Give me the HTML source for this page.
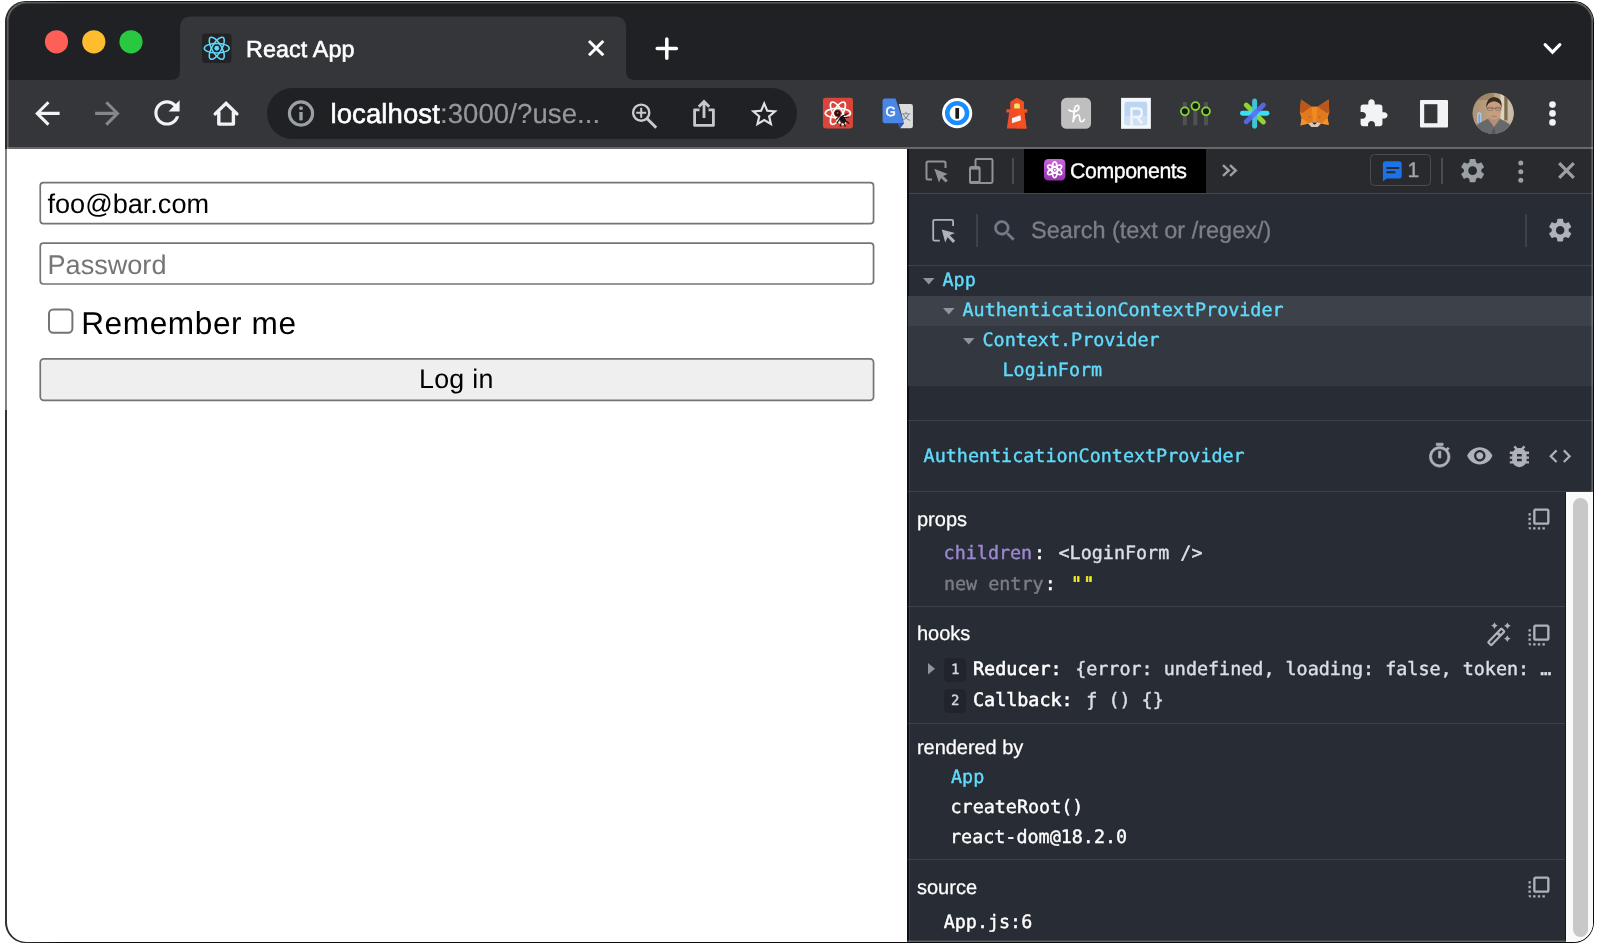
<!DOCTYPE html>
<html lang="en">
<head>
<meta charset="utf-8">
<title>React App</title>
<style>
*{box-sizing:border-box;margin:0;padding:0}
html,body{width:1600px;height:943px;overflow:hidden;background:#fff}
body{font-family:"Liberation Sans",sans-serif;position:relative;text-rendering:geometricPrecision}
.abs{position:absolute}
svg{display:block;overflow:visible}
/* window */
#frame{position:absolute;left:5.1px;top:1px;width:1589px;height:942px;border-radius:20.5px;background:linear-gradient(to right,#2c2c2e 0,#2c2c2e 20px,#0a0a0c 60px)}
#lline1{position:absolute;left:5.1px;top:148.8px;width:1.7px;height:260.8px;background:#828282}
#lline2{position:absolute;left:5.1px;top:409.6px;width:1.7px;height:514px;background:#353535}
#win{position:absolute;left:6.7px;top:1.9px;width:1586.4px;height:939.9px;border-radius:19.5px;overflow:hidden;background:#fff}
#tabstrip{position:absolute;left:0;top:0;width:1588px;height:78.1px;background:#202124}
#toolbar{position:absolute;left:0;top:78.1px;width:1588px;height:68.8px;background:#35363a}
#hl{position:absolute;left:0;top:0;right:0;bottom:0;border-radius:19.5px;box-shadow:inset 0 0 0 1.6px rgba(255,255,255,.26);pointer-events:none}
/* all following coords are image coords */
#c{position:absolute;left:-6.7px;top:-1.9px;width:1600px;height:943px;will-change:transform}
.t{position:absolute;white-space:pre;line-height:1}
.mono{font-family:"DejaVu Sans Mono","Liberation Mono",monospace;-webkit-text-stroke:.4px currentColor}
.mono b{font-weight:normal;-webkit-text-stroke:.55px #fff}
</style>
</head>
<body>
<div id="frame"></div>
<div id="lline1"></div><div id="lline2"></div>
<div id="win">
 <div id="tabstrip"></div>
 <div id="toolbar"></div>
 <div id="c">
 
 <svg class="abs" style="left:0;top:0" width="1600" height="160" viewBox="0 0 1600 160">
  <path d="M171 80 Q180 80 180 71 L180 28 Q180 16.5 191.5 16.5 L614.5 16.5 Q626 16.5 626 28 L626 71 Q626 80 635 80 Z" fill="#35363a"/>
  <circle cx="56.5" cy="41.8" r="11.6" fill="#fe5f57"/>
  <circle cx="93.8" cy="41.8" r="11.6" fill="#febc2e"/>
  <circle cx="131" cy="41.8" r="11.6" fill="#28c840"/>
  <rect x="202" y="33.5" width="29.5" height="29.5" rx="3.5" fill="#232325"/>
  <g transform="translate(216.75 48.25)" fill="none" stroke="#61dafb" stroke-width="1.5">
   <ellipse rx="12.5" ry="4.8"/>
   <ellipse rx="12.5" ry="4.8" transform="rotate(60)"/>
   <ellipse rx="12.5" ry="4.8" transform="rotate(120)"/>
   <circle r="2.4" fill="#61dafb" stroke="none"/>
  </g>
  <path d="M589 41 L603.3 55.3 M603.3 41 L589 55.3" stroke="#fff" stroke-width="3" fill="none"/>
  <path d="M657.2 48.6 H676.4 M666.8 39 V58.2" stroke="#fff" stroke-width="3.5" stroke-linecap="round" fill="none"/>
  <path d="M1545.1 44.7 L1552.5 52.2 L1559.9 44.7" stroke="#fff" stroke-width="3.1" stroke-linecap="round" stroke-linejoin="miter" fill="none"/>
 </svg>
 <div class="t" id="tabtitle" style="left:246px;top:37.6px;font-size:23.3px;color:#fff;letter-spacing:.12px;-webkit-text-stroke:.55px #fff">React App</div>
 <!--TABSTRIP-->
 <svg class="abs" style="left:28.88px;top:94.88px" width="36.75" height="36.75" viewBox="0 0 24 24"><path d="M20 11H7.83l5.59-5.59L12 4l-8 8 8 8 1.41-1.41L7.83 13H20v-2z" fill="#f1f3f4" /></svg>
<svg class="abs" style="left:88.88px;top:94.88px" width="36.75" height="36.75" viewBox="0 0 24 24"><path d="M12 4l-1.41 1.41L16.17 11H4v2h12.17l-5.58 5.59L12 20l8-8z" fill="#86878a" /></svg>
<svg class="abs" style="left:148.33px;top:94.32px" width="37.95" height="37.95" viewBox="0 0 24 24"><path d="M17.65 6.35C16.2 4.9 14.21 4 12 4c-4.42 0-7.99 3.58-7.99 8s3.57 8 7.99 8c3.73 0 6.84-2.55 7.73-6h-2.08c-.82 2.33-3.04 4-5.65 4-3.31 0-6-2.69-6-6s2.69-6 6-6c1.66 0 3.14.69 4.22 1.78L13 11h7V4l-2.35 2.35z" fill="#f1f3f4" /></svg>
<svg class="abs" style="left:0;top:0" width="400" height="150" viewBox="0 0 400 150"><path d="M215.2 113.9 L226.06 103.4 L236.9 113.9" fill="none" stroke="#f1f3f4" stroke-width="3.4" stroke-linecap="round" stroke-linejoin="miter"/><path d="M218.8 111.6 V124.1 H233.4 V111.6" fill="none" stroke="#f1f3f4" stroke-width="3.4" stroke-linejoin="round"/></svg>
<div class="abs" style="left:267px;top:87.5px;width:530px;height:51.5px;border-radius:26px;background:#202124"></div>
<svg class="abs" style="left:280px;top:93px" width="42" height="42" viewBox="280 93 42 42"><circle cx="301" cy="113.5" r="11.6" fill="none" stroke="#9aa0a6" stroke-width="3.1"/><circle cx="301" cy="108.2" r="1.9" fill="#9aa0a6"/><rect x="299.3" y="112" width="3.4" height="8.4" fill="#9aa0a6"/></svg>
<div class="t" id="url" style="left:330.5px;top:99.8px;font-size:27.5px;color:#fff;letter-spacing:.1px;-webkit-text-stroke:.6px #fff">localhost<span style="color:#94979b;-webkit-text-stroke:.2px #94979b">:3000/?use...</span></div>
<svg class="abs" style="left:625px;top:97px" width="40" height="36" viewBox="625 97 40 36"><circle cx="641.2" cy="112.7" r="8.1" fill="none" stroke="#c8cacd" stroke-width="2.4"/><path d="M647.2 118.8 L656.2 127.8" stroke="#c8cacd" stroke-width="2.9" fill="none"/><path d="M636.2 112.7 H646.2 M641.2 107.7 V117.7" stroke="#c8cacd" stroke-width="2" fill="none"/></svg>
<svg class="abs" style="left:688px;top:97px" width="32" height="32" viewBox="0 0 32 32"><path d="M11.5 12.8 H6.6 V28.4 H25.4 V12.8 H20.5" fill="none" stroke="#c5c8cc" stroke-width="2.8" stroke-linejoin="round"/><path d="M16 21 V5.5 M10.8 9.8 L16 4.6 L21.2 9.8" fill="none" stroke="#c5c8cc" stroke-width="2.8"/></svg>
<svg class="abs" style="left:747.8px;top:97.6px" width="32.4" height="32.4" viewBox="0 0 24 24"><path d="M22 9.24l-7.19-.62L12 2 9.19 8.63 2 9.24l5.46 4.73L5.82 21 12 17.27 18.18 21l-1.63-7.03L22 9.24zM12 15.4l-3.76 2.27 1-4.28-3.32-2.88 4.38-.38L12 6.1l1.71 4.04 4.38.38-3.32 2.88 1 4.28L12 15.4z" fill="#dfe1e5" /></svg>
<svg class="abs" style="left:1358.4px;top:98.3px" width="30.86" height="30.86" viewBox="0 0 24 24"><path d="M20.5 11H19V7c0-1.1-.9-2-2-2h-4V3.5C13 2.12 11.88 1 10.5 1S8 2.12 8 3.5V5H4c-1.1 0-1.99.9-1.99 2v3.8H3.5c1.49 0 2.7 1.21 2.7 2.7s-1.21 2.7-2.7 2.7H2V20c0 1.1.9 2 2 2h3.8v-1.5c0-1.49 1.21-2.7 2.7-2.7 1.49 0 2.7 1.21 2.7 2.7V22H17c1.1 0 2-.9 2-2v-4h1.5c1.38 0 2.5-1.12 2.5-2.5S21.88 11 20.5 11z" fill="#f1f3f4" /></svg>
<svg class="abs" style="left:1419.5px;top:99.5px" width="28" height="27.5" viewBox="0 0 28 27.5"><rect x="0" y="0" width="28" height="27.5" rx="1" fill="#f1f3f4"/><rect x="4.2" y="4.2" width="13.2" height="19" fill="#35363a"/></svg>
<svg class="abs" style="left:1545px;top:98px" width="15" height="30" viewBox="0 0 15 30"><circle cx="7.5" cy="6.6" r="3.3" fill="#f1f3f4"/><circle cx="7.5" cy="15.4" r="3.3" fill="#f1f3f4"/><circle cx="7.5" cy="24.4" r="3.3" fill="#f1f3f4"/></svg>
 <svg class="abs" style="left:810px;top:90px" width="180" height="46" viewBox="0 0 1600 408.9">
<rect x="115" y="70" width="267" height="272" rx="22" fill="#d9453a"/>
<g transform="translate(248 206)" fill="none" stroke="#fff" stroke-width="15"><ellipse rx="112" ry="42"/><ellipse rx="112" ry="42" transform="rotate(60)"/><ellipse rx="112" ry="42" transform="rotate(120)"/></g>
<g fill="#151515" stroke="#151515" stroke-linecap="round"><circle cx="245" cy="207" r="27"/><ellipse cx="292" cy="262" rx="24" ry="34" transform="rotate(-38 292 262)"/><path d="M262 232 L232 262 M270 250 L240 292 M290 232 L330 212 M308 246 L345 240 M300 290 L312 322 M318 276 L345 296 M278 292 L268 322" stroke-width="10" fill="none"/></g>
<circle cx="245" cy="205" r="9" fill="#d9453a"/>
<path d="M668 75 H760 L835 295 H668 Q645 295 645 272 V98 Q645 75 668 75 Z" fill="#4a86e8"/>
<path d="M790 125 H895 Q915 125 915 145 V320 Q915 340 895 340 H800 L835 295 Z" fill="#dcdcdc"/>
<path d="M775 295 H835 L800 340 Z" fill="#3a55b4"/>
<text x="718" y="228" font-family="Liberation Sans, sans-serif" font-size="118" fill="#fff" stroke="#fff" stroke-width="5" text-anchor="middle">G</text>
<text x="853" y="270" font-family="Noto Sans CJK SC, Liberation Sans, sans-serif" font-size="88" fill="#5f7f90" text-anchor="middle">文</text>
<circle cx="1308" cy="206" r="134" fill="#fff"/>
<circle cx="1308" cy="206" r="88" fill="none" stroke="#1a8cff" stroke-width="40"/>
<rect x="1292" y="160" width="33" height="96" rx="4" fill="#1b1b1b"/>
</svg>
<svg class="abs" style="left:990px;top:90px" width="180" height="46" viewBox="0 0 1600 408.9">
<path d="M237 70 L300 105 V172 H330 V200 H305 L325 342 H150 L170 200 H145 V172 H180 V105 Z" fill="#ee4d28"/>
<path d="M237 70 L300 105 V172 H330 V200 H305 L325 342 H237 Z" fill="#f4511e"/>
<path d="M215 165 V135 Q215 118 240 118 Q265 118 265 135 V165 Z" fill="#f3e26c"/>
<path d="M195 252 L270 224 L276 268 L195 296 Z" fill="#f2f2f2"/>
<rect x="632" y="70" width="266" height="275" rx="48" fill="#bfbfbf"/>
<path d="M700 178 C735 205 790 190 790 155 C790 128 758 132 752 165 C745 205 745 245 738 282 C748 235 775 215 790 225 C805 238 790 280 812 282 C826 282 835 272 840 262" fill="none" stroke="#fff" stroke-width="15" stroke-linecap="round" stroke-linejoin="round"/>
<rect x="1165" y="70" width="265" height="275" fill="#f4f7fb"/>
<rect x="1195" y="105" width="202" height="208" rx="22" fill="#bcd6f1"/>
<rect x="1195" y="230" width="202" height="83" rx="22" fill="#cfe0f3"/>
<path d="M1258 330 V165 H1310 Q1350 165 1350 202 Q1350 240 1310 240 H1275 M1310 240 L1350 295" fill="none" stroke="#f0f6fd" stroke-width="22" stroke-linejoin="round"/>
</svg>
<svg class="abs" style="left:1170px;top:90px" width="180" height="46" viewBox="0 0 1600 408.9">
<g fill="#505154"><rect x="114" y="106" width="36" height="208" rx="6"/><rect x="207" y="106" width="36" height="208" rx="6"/><rect x="302" y="106" width="36" height="208" rx="6"/></g>
<g fill="#17181a" stroke="#86d82c" stroke-width="16"><circle cx="132" cy="190" r="35"/><circle cx="226" cy="143" r="35"/><circle cx="320" cy="190" r="35"/></g>
<g stroke-linecap="round" stroke-width="44" fill="none">
<path d="M678 134 L830 284" stroke="#8fd435"/>
<path d="M644 207 H862" stroke="#38dff5"/>
<path d="M752 98 V322" stroke="#3fc4d6"/>
<path d="M830 134 L678 282" stroke="#5b6ef5" opacity=".88"/>
</g>
<path d="M1165 85 L1258 150 H1312 L1410 85 L1416 200 L1400 250 L1412 312 L1342 298 L1312 328 H1258 L1228 298 L1160 315 L1170 250 L1154 200 Z" fill="#e8821e"/>
<path d="M1165 85 L1258 150 L1180 205 L1154 200 Z" fill="#b9571d"/>
<path d="M1410 85 L1312 150 L1390 205 L1416 200 Z" fill="#b9571d"/>
<path d="M1258 150 H1312 L1300 290 H1270 Z" fill="#f08a23"/>
<path d="M1180 205 L1258 150 L1270 290 L1228 298 L1170 250 Z" fill="#e27a1c"/>
<path d="M1390 205 L1312 150 L1300 290 L1342 298 L1400 250 Z" fill="#e27a1c"/>
<path d="M1160 315 L1228 298 L1170 250 Z M1412 312 L1342 298 L1400 250 Z" fill="#f29330"/>
<path d="M1228 298 L1270 285 H1300 L1342 298 L1312 328 H1258 Z" fill="#dcc8b6"/>
<path d="M1262 290 H1308 L1285 310 Z" fill="#1d1d1d"/>
<path d="M1228 232 L1256 240 L1240 250 Z M1342 232 L1314 240 L1330 250 Z" fill="#9c6a3c"/>
</svg>
<svg class="abs" style="left:1350px;top:90px" width="180" height="46" viewBox="0 0 1600 408.9">
<defs><clipPath id="av"><circle cx="1272" cy="207.5" r="183"/></clipPath>
<linearGradient id="avbg" x1="0" y1="0" x2="1" y2="0"><stop offset="0" stop-color="#ad9272"/><stop offset=".55" stop-color="#bba486"/><stop offset="1" stop-color="#c9bca4"/></linearGradient></defs>
<g clip-path="url(#av)">
<rect x="1080" y="20" width="390" height="380" fill="url(#avbg)"/>
<rect x="1080" y="20" width="200" height="70" fill="#8f775a" opacity=".6"/>
<rect x="1338" y="20" width="34" height="250" fill="#ddd2bc"/>
<rect x="1372" y="20" width="30" height="250" fill="#7a6a50"/>
<rect x="1402" y="20" width="60" height="250" fill="#c9bda6"/>
<rect x="1130" y="198" width="38" height="100" rx="18" fill="#a9c9ec"/>
<rect x="1142" y="215" width="14" height="80" fill="#7f9fc6"/>
<path d="M1090 400 L1100 330 Q1150 290 1225 255 L1335 255 Q1400 285 1440 320 L1460 400 Z" fill="#666a6d"/>
<path d="M1225 255 L1280 330 L1335 255 L1320 235 H1240 Z" fill="#b58f74"/>
<path d="M1280 330 L1250 400 H1300 Z" fill="#54585b"/>
<ellipse cx="1280" cy="172" rx="66" ry="92" fill="#c59d80"/>
<path d="M1212 160 Q1205 70 1280 62 Q1358 68 1350 160 Q1340 105 1280 100 Q1222 105 1212 160 Z" fill="#3a2a1f"/>
<path d="M1216 162 H1346" stroke="#4b4039" stroke-width="5" opacity=".8"/>
<rect x="1222" y="154" width="46" height="28" rx="8" fill="none" stroke="#4b4039" stroke-width="4" opacity=".7"/>
<rect x="1294" y="154" width="46" height="28" rx="8" fill="none" stroke="#4b4039" stroke-width="4" opacity=".7"/>
<path d="M1258 232 Q1280 240 1302 232" stroke="#9b6f5a" stroke-width="6" fill="none"/>
</g>
</svg>
 <!--TOOLBAR-->
 
 <svg class="abs" style="left:0;top:170px" width="900" height="240" viewBox="0 170 900 240">
  <rect x="40.25" y="182.7" width="833.3" height="40.9" rx="3.2" fill="#fff" stroke="#747474" stroke-width="1.7"/>
  <rect x="40.25" y="243.1" width="833.3" height="40.9" rx="3.2" fill="#fff" stroke="#747474" stroke-width="1.7"/>
  <rect x="49" y="309.4" width="23.4" height="23.4" rx="4.2" fill="#fff" stroke="#747474" stroke-width="2"/>
  <rect x="40.25" y="358.8" width="833.3" height="41.6" rx="3.6" fill="#efefef" stroke="#747474" stroke-width="1.7"/>
 </svg>
 <div class="t" id="email" style="left:47.5px;top:190.2px;font-size:27.1px;color:#000">foo@bar.com</div>
 <div class="t" id="pw" style="left:47.5px;top:250.9px;font-size:27.1px;color:#757575">Password</div>
 <div class="t" id="rem" style="left:81.2px;top:307.9px;font-size:31.6px;letter-spacing:.6px;color:#000">Remember me</div>
 <div class="t" id="login" style="left:38.8px;width:835px;text-align:center;top:366.4px;font-size:26.8px;letter-spacing:.25px;color:#000">Log in</div>
 <!--PAGE-->
 
 <div class="abs" style="left:907.5px;top:148px;width:687px;height:795px;background:#282c34"></div>
 <div class="abs" style="left:907.5px;top:148px;width:687px;height:45.5px;background:#292a2d"></div>
 <div class="abs" style="left:907.5px;top:193px;width:687px;height:1.2px;background:#45474b"></div>
 <div class="abs" style="left:1024px;top:148px;width:182px;height:44.5px;background:#000"></div>
 <div class="abs" style="left:907.2px;top:148.8px;width:1.6px;height:795px;background:#0e0e18"></div>
 <div class="abs" style="left:1012.2px;top:157.5px;width:1.7px;height:26.5px;background:#4a4c50"></div>
 <div class="abs" style="left:1441.1px;top:157.5px;width:1.7px;height:26.5px;background:#4a4c50"></div>
 <div class="abs" style="left:1370px;top:154.3px;width:60.5px;height:31.5px;border:1.2px solid #4a4c50;border-radius:4.5px"></div>
<svg class="abs" style="left:923.5px;top:159px" width="26" height="26" viewBox="0 0 26 26"><path d="M8 20.5 H4 Q2.5 20.5 2.5 19 V4 Q2.5 2.5 4 2.5 H20 Q21.5 2.5 21.5 4 V9" fill="none" stroke="#919295" stroke-width="2"/><path d="M10.3 9.8 L23.6 15 L19.2 17 L23.8 21.6 L21.6 23.6 L17 19 L15 23.4 Z" fill="#919295"/></svg>
<svg class="abs" style="left:968px;top:156.5px" width="28" height="29" viewBox="0 0 28 29"><path d="M7.5 9.5 V3.4 Q7.5 2 8.9 2 H23.1 Q24.5 2 24.5 3.4 V24.6 Q24.5 26 23.1 26 H12" fill="none" stroke="#919295" stroke-width="2"/><rect x="2" y="10" width="9.6" height="16" rx="1.6" fill="none" stroke="#919295" stroke-width="2"/><rect x="2" y="10" width="9.6" height="2.6" fill="#919295"/><rect x="2" y="24" width="9.6" height="2.4" fill="#919295"/></svg>
<svg class="abs" style="left:1043.8px;top:159px" width="21.4" height="21.6" viewBox="0 0 21.4 21.6"><defs><linearGradient id="pg" x1="0" y1="0" x2="0" y2="1"><stop offset="0" stop-color="#c868dc"/><stop offset="1" stop-color="#9630b0"/></linearGradient></defs><rect width="21.4" height="21.6" rx="4.4" fill="url(#pg)"/><g transform="translate(10.7 10.8)" fill="none" stroke="#fff" stroke-width="1.55"><ellipse rx="2.7" ry="8"/><ellipse rx="2.7" ry="8" transform="rotate(60)"/><ellipse rx="2.7" ry="8" transform="rotate(120)"/><circle r="1.1" fill="#fff" stroke="none"/></g></svg>
<div class="t" id="comp" style="left:1070px;top:160.8px;font-size:21.3px;letter-spacing:-.42px;color:#fff;-webkit-text-stroke:.35px #fff">Components</div>
<svg class="abs" style="left:1218px;top:160px" width="22" height="22" viewBox="1218 160 22 22"><path d="M1223 165.2 L1228.8 170.5 L1223 175.8 M1230 165.2 L1235.8 170.5 L1230 175.8" fill="none" stroke="#9aa0a6" stroke-width="2.4"/></svg>
<svg class="abs" style="left:1380px;top:158px" width="26" height="26" viewBox="1380 158 26 26"><path d="M1385.6 161.3 H1398.9 Q1401.7 161.3 1401.7 164.1 V175.7 Q1401.7 178.5 1398.9 178.5 H1386.6 L1382.9 181.6 V164.1 Q1382.9 161.3 1385.6 161.3 Z" fill="#1a73e8"/><path d="M1387.2 168 H1398.4 M1387.2 172.2 H1394.6" stroke="#292a2d" stroke-width="2" stroke-linecap="round"/></svg>
<div class="t" id="one" style="left:1407.4px;top:160.4px;font-size:21px;color:#a2a6ab;-webkit-text-stroke:.35px #a2a6ab">1</div>
<svg class="abs" style="left:1458.38px;top:156.22px" width="29.25" height="29.25" viewBox="0 0 24 24"><path d="M19.14 12.94c.04-.3.06-.61.06-.94 0-.32-.02-.64-.07-.94l2.03-1.58c.18-.14.23-.41.12-.61l-1.92-3.32c-.12-.22-.37-.29-.59-.22l-2.39.96c-.5-.38-1.03-.7-1.62-.94l-.36-2.54c-.04-.24-.24-.41-.48-.41h-3.84c-.24 0-.43.17-.47.41l-.36 2.54c-.59.24-1.13.57-1.62.94l-2.39-.96c-.22-.08-.47 0-.59.22L2.74 8.87c-.12.21-.08.47.12.61l2.03 1.58c-.05.3-.09.63-.09.94s.02.64.07.94l-2.03 1.58c-.18.14-.23.41-.12.61l1.92 3.32c.12.22.37.29.59.22l2.39-.96c.5.38 1.03.7 1.62.94l.36 2.54c.05.24.24.41.48.41h3.84c.24 0 .44-.17.47-.41l.36-2.54c.59-.24 1.13-.56 1.62-.94l2.39.96c.22.08.47 0 .59-.22l1.92-3.32c.12-.22.07-.47-.12-.61l-2.01-1.58zM12 15.6c-1.98 0-3.6-1.62-3.6-3.6s1.62-3.6 3.6-3.6 3.6 1.62 3.6 3.6-1.62 3.6-3.6 3.6z" fill="#9aa0a6"/></svg>
<svg class="abs" style="left:1516px;top:159px" width="10" height="25" viewBox="0 0 10 25"><circle cx="4.8" cy="4" r="2.5" fill="#9aa0a6"/><circle cx="4.8" cy="12.7" r="2.5" fill="#9aa0a6"/><circle cx="4.8" cy="21.2" r="2.5" fill="#9aa0a6"/></svg>
<svg class="abs" style="left:1556px;top:160.2px" width="21" height="21" viewBox="0 0 21 21"><path d="M3.2 3.2 L17.8 17.8 M17.8 3.2 L3.2 17.8" fill="none" stroke="#9aa0a6" stroke-width="3.2"/></svg>
<div class="abs" style="left:907.5px;top:265px;width:687px;height:1.2px;background:#3d424a"></div>
<svg class="abs" style="left:930.5px;top:218px" width="26" height="26" viewBox="0 0 26 26"><path d="M8.8 22.6 H3.6 Q2.2 22.6 2.2 21.2 V3.3 Q2.2 1.9 3.6 1.9 H20.7 Q22.1 1.9 22.1 3.3 V8" fill="none" stroke="#afb3b9" stroke-width="1.8"/><path d="M10.7 11.5 L24 15 L18.8 17.2 L24.2 22.8 L22 24.9 L16.6 19.3 L14.2 24.4 Z" fill="#afb3b9"/></svg>
<div class="abs" style="left:976px;top:214px;width:1.8px;height:33px;background:#3d424a"></div>
<div class="abs" style="left:1525.3px;top:214px;width:1.8px;height:33px;background:#3d424a"></div>
<svg class="abs" style="left:990.77px;top:217.17px" width="27.44" height="27.44" viewBox="0 0 24 24"><path d="M15.5 14h-.79l-.28-.27C15.41 12.59 16 11.11 16 9.5 16 5.91 13.09 3 9.5 3S3 5.91 3 9.5 5.91 16 9.5 16c1.61 0 3.09-.59 4.23-1.57l.27.28v.79l5 4.99L20.49 19l-4.99-5zm-6 0C7.01 14 5 11.99 5 9.5S7.01 5 9.5 5 14 7.01 14 9.5 11.99 14 9.5 14z" fill="#777d88" stroke="#777d88" stroke-width=".35"/></svg>
<div class="t" id="search" style="left:1031px;top:219.00px;font-size:23.5px;color:#7c7f86;-webkit-text-stroke:.3px #7c7f86">Search (text or /regex/)</div>
<svg class="abs" style="left:1545.81px;top:216.11px" width="28.38" height="28.38" viewBox="0 0 24 24"><path d="M19.14 12.94c.04-.3.06-.61.06-.94 0-.32-.02-.64-.07-.94l2.03-1.58c.18-.14.23-.41.12-.61l-1.92-3.32c-.12-.22-.37-.29-.59-.22l-2.39.96c-.5-.38-1.03-.7-1.62-.94l-.36-2.54c-.04-.24-.24-.41-.48-.41h-3.84c-.24 0-.43.17-.47.41l-.36 2.54c-.59.24-1.13.57-1.62.94l-2.39-.96c-.22-.08-.47 0-.59.22L2.74 8.87c-.12.21-.08.47.12.61l2.03 1.58c-.05.3-.09.63-.09.94s.02.64.07.94l-2.03 1.58c-.18.14-.23.41-.12.61l1.92 3.32c.12.22.37.29.59.22l2.39-.96c.5.38 1.03.7 1.62.94l.36 2.54c.05.24.24.41.48.41h3.84c.24 0 .44-.17.47-.41l.36-2.54c.59-.24 1.13-.56 1.62-.94l2.39.96c.22.08.47 0 .59-.22l1.92-3.32c.12-.22.07-.47-.12-.61l-2.01-1.58zM12 15.6c-1.98 0-3.6-1.62-3.6-3.6s1.62-3.6 3.6-3.6 3.6 1.62 3.6 3.6-1.62 3.6-3.6 3.6z" fill="#afb3b9"/></svg>
 <div class="abs" style="left:907.5px;top:296.2px;width:687px;height:30px;background:#3d424a"></div>
<div class="abs" style="left:907.5px;top:326.2px;width:687px;height:60.2px;background:#33373f"></div>
<svg class="abs" style="left:923px;top:278.10px" width="11.5" height="6.4" viewBox="0 0 11.5 6.4"><path d="M0 0 H11.5 L5.75 6.4 Z" fill="#8f949d"/></svg>
<div class="t mono" id="t1" style="left:942.5px;top:272.34px;font-size:18.4px;color:#61dafb;">App</div>
<svg class="abs" style="left:943px;top:308.10px" width="11.5" height="6.4" viewBox="0 0 11.5 6.4"><path d="M0 0 H11.5 L5.75 6.4 Z" fill="#8f949d"/></svg>
<div class="t mono" id="t2" style="left:962.5px;top:302.34px;font-size:18.4px;color:#61dafb;">AuthenticationContextProvider</div>
<svg class="abs" style="left:963.3px;top:338.10px" width="11.5" height="6.4" viewBox="0 0 11.5 6.4"><path d="M0 0 H11.5 L5.75 6.4 Z" fill="#8f949d"/></svg>
<div class="t mono" id="t3" style="left:982.5px;top:332.34px;font-size:18.4px;color:#61dafb;">Context.Provider</div>
<div class="t mono" id="t4" style="left:1002.5px;top:362.34px;font-size:18.4px;color:#61dafb;">LoginForm</div>
<div class="abs" style="left:907.5px;top:420.2px;width:687px;height:1.2px;background:#3d424a"></div>
<div class="abs" style="left:908.8px;top:421px;width:1.3px;height:522px;background:#3a3e47"></div>
<div class="t mono" id="ti" style="left:923.60px;top:447.74px;font-size:18.4px;color:#61dafb;">AuthenticationContextProvider</div>
<svg class="abs" style="left:1425.99px;top:442.26px" width="27.43" height="27.43" viewBox="0 0 24 24"><path d="M15 1H9v2h6V1zm-4 13h2V8h-2v6zm8.03-6.61l1.42-1.42c-.43-.51-.9-.99-1.41-1.41l-1.42 1.42C16.07 4.74 14.12 4 12 4c-4.97 0-9 4.03-9 9s4.02 9 9 9 9-4.03 9-9c0-2.12-.74-4.07-1.97-5.61zM12 20c-3.87 0-7-3.13-7-7s3.13-7 7-7 7 3.13 7 7-3.13 7-7 7z" fill="#afb3b9" stroke="#afb3b9" stroke-width=".55"/></svg>
<svg class="abs" style="left:1465.7px;top:441.8px" width="27.6" height="27.6" viewBox="0 0 24 24"><path d="M12 4.5C7 4.5 2.73 7.61 1 12c1.73 4.39 6 7.5 11 7.5s9.27-3.11 11-7.5c-1.73-4.39-6-7.5-11-7.5zM12 17c-2.76 0-5-2.24-5-5s2.24-5 5-5 5 2.24 5 5-2.24 5-5 5zm0-8c-1.66 0-3 1.34-3 3s1.34 3 3 3 3-1.34 3-3-1.34-3-3-3z" fill="#afb3b9"/></svg>
<svg class="abs" style="left:1505.10px;top:442.10px" width="28.80" height="28.80" viewBox="0 0 24 24"><path d="M20 8h-2.81c-.45-.78-1.07-1.45-1.82-1.96L17 4.41 15.59 3l-2.17 2.17C12.96 5.06 12.49 5 12 5c-.49 0-.96.06-1.41.17L8.41 3 7 4.41l1.62 1.63C7.88 6.55 7.26 7.22 6.81 8H4v2h2.09c-.05.33-.09.66-.09 1v1H4v2h2v1c0 .34.04.67.09 1H4v2h2.81c1.04 1.79 2.97 3 5.19 3s4.15-1.21 5.19-3H20v-2h-2.09c.05-.33.09-.66.09-1v-1h2v-2h-2v-1c0-.34-.04-.67-.09-1H20V8zm-6 8h-4v-2h4v2zm0-4h-4v-2h4v2z" fill="#afb3b9"/></svg>
<svg class="abs" style="left:1546.8px;top:443.0px" width="26.4" height="26.4" viewBox="0 0 24 24"><path d="M9.4 16.6L4.8 12l4.6-4.6L8 6l-6 6 6 6 1.4-1.4zm5.2 0l4.6-4.6-4.6-4.6L16 6l6 6-6 6-1.4-1.4z" fill="#afb3b9"/></svg>
<div class="abs" style="left:907.5px;top:490.8px;width:687px;height:1.2px;background:#3d424a"></div>
<div class="abs" style="left:1565px;top:492px;width:29px;height:451px;background:#fafafa;border-left:1px solid #15171d"></div>
<div class="abs" style="left:1573px;top:497.5px;width:15px;height:439px;border-radius:7.5px;background:#c8c8c8"></div>
<div class="t" id="s1" style="-webkit-text-stroke:.25px #fff;left:917px;top:509.90px;font-size:20px;color:#fff;">props</div>
<svg class="abs" style="left:1525.0px;top:505.0px" width="28.0" height="28.0" viewBox="0 0 24 24"><path d="M3 13h2v-2H3v2zm0 4h2v-2H3v2zm2 4v-2H3c0 1.1.89 2 2 2zM3 9h2V7H3v2zm12 12h2v-2h-2v2zm4-18H9c-1.11 0-2 .9-2 2v10c0 1.1.89 2 2 2h10c1.1 0 2-.9 2-2V5c0-1.1-.9-2-2-2zm0 12H9V5h10v10zm-8 6h2v-2h-2v2zm-4 0h2v-2H7v2z" fill="#afb3b9"/></svg>
<div class="t mono" id="p1" style="left:943.60px;top:545.04px;font-size:18.4px;color:#fff;"><span style="color:#9d87d2">children</span><span style="margin-left:1.8px">:</span> <span style="color:#d6e0e5;margin-left:2.4px">&lt;LoginForm /&gt;</span></div>
<div class="t mono" id="p2" style="left:943.90px;top:576.14px;font-size:18.4px;color:#fff;"><span style="color:#7b7d82">new entry</span><span style="margin-left:1.2px">:</span> <span style="color:#eeee22;margin-left:4px;letter-spacing:1.3px;-webkit-text-stroke:.7px #eeee22">""</span></div>
<div class="abs" style="left:907.5px;top:606.3px;width:657.5px;height:1.2px;background:#3d424a"></div>
<div class="t" id="s2" style="-webkit-text-stroke:.25px #fff;left:917.00px;top:624.30px;font-size:20px;color:#fff;">hooks</div>
<svg class="abs" style="left:1525.0px;top:620.5px" width="28.0" height="28.0" viewBox="0 0 24 24"><path d="M3 13h2v-2H3v2zm0 4h2v-2H3v2zm2 4v-2H3c0 1.1.89 2 2 2zM3 9h2V7H3v2zm12 12h2v-2h-2v2zm4-18H9c-1.11 0-2 .9-2 2v10c0 1.1.89 2 2 2h10c1.1 0 2-.9 2-2V5c0-1.1-.9-2-2-2zm0 12H9V5h10v10zm-8 6h2v-2h-2v2zm-4 0h2v-2H7v2z" fill="#afb3b9"/></svg>
<svg class="abs" style="left:1484px;top:618px" width="30" height="32" viewBox="1484 618 30 32"><path d="M1494.5 622.3000000000001 L1495.7 624.4 L1497.8 625.6 L1495.7 626.8000000000001 L1494.5 628.9 L1493.3 626.8000000000001 L1491.2 625.6 L1493.3 624.4 Z M1507.4 622.5 L1508.6000000000001 624.5999999999999 L1510.7 625.8 L1508.6000000000001 627.0 L1507.4 629.0999999999999 L1506.2 627.0 L1504.1000000000001 625.8 L1506.2 624.5999999999999 Z M1507.3 635.3000000000001 L1508.5 637.4 L1510.6 638.6 L1508.5 639.8000000000001 L1507.3 641.9 L1506.1 639.8000000000001 L1504.0 638.6 L1506.1 637.4 Z" fill="#afb3b9"/><g transform="translate(1496.3 636.9) rotate(-46)"><rect x="-9.6" y="-2.2" width="19.2" height="4.4" rx=".8" fill="none" stroke="#afb3b9" stroke-width="2.2"/><rect x="2.2" y="-2.2" width="3" height="4.4" fill="#afb3b9"/></g></svg>
<svg class="abs" style="left:928px;top:663px" width="7" height="11.5" viewBox="0 0 7 11.5"><path d="M0 0 L7 5.75 L0 11.5 Z" fill="#8f949d"/></svg>
<div class="abs" style="left:944.3px;top:657.8px;width:22.2px;height:24px;border-radius:4.5px;background:#21242a"></div>
<div class="abs" style="left:944.3px;top:688.8px;width:22.2px;height:24px;border-radius:4.5px;background:#21242a"></div>
<div class="t mono" id="h1n" style="left:951.1px;top:663.2px;font-size:14px;color:#d2d5d9;-webkit-text-stroke:.4px #d2d5d9;">1</div>
<div class="t mono" id="h2n" style="left:951.1px;top:694.3px;font-size:14px;color:#d2d5d9;-webkit-text-stroke:.4px #d2d5d9;">2</div>
<div class="t mono" id="h1" style="left:973px;top:660.64px;font-size:18.4px;color:#fff;"><b>Reducer:</b> <span style="color:#d6e0e5;margin-left:2.5px">{error: undefined, loading: false, token: …</span></div>
<div class="t mono" id="h2" style="left:973px;top:691.64px;font-size:18.4px;color:#fff;"><b>Callback:</b> <span style="color:#d6e0e5;margin-left:2.5px">ƒ () {}</span></div>
<div class="abs" style="left:907.5px;top:723.3px;width:657.5px;height:1.2px;background:#3d424a"></div>
<div class="t" id="s3" style="-webkit-text-stroke:.25px #fff;letter-spacing:-.05px;left:917.00px;top:737.60px;font-size:20px;color:#fff;">rendered by</div>
<div class="t mono" id="r1" style="left:951.00px;top:768.64px;font-size:18.4px;color:#61dafb;">App</div>
<div class="t mono" id="r2" style="left:950.50px;top:798.64px;font-size:18.4px;color:#fff;">createRoot()</div>
<div class="t mono" id="r3" style="left:950.00px;top:828.64px;font-size:18.4px;color:#fff;">react-dom@18.2.0</div>
<div class="abs" style="left:907.5px;top:858.6px;width:657.5px;height:1.2px;background:#3d424a"></div>
<div class="t" id="s4" style="-webkit-text-stroke:.25px #fff;left:917px;top:878.20px;font-size:20px;color:#fff;">source</div>
<svg class="abs" style="left:1525.0px;top:873.0px" width="28.0" height="28.0" viewBox="0 0 24 24"><path d="M3 13h2v-2H3v2zm0 4h2v-2H3v2zm2 4v-2H3c0 1.1.89 2 2 2zM3 9h2V7H3v2zm12 12h2v-2h-2v2zm4-18H9c-1.11 0-2 .9-2 2v10c0 1.1.89 2 2 2h10c1.1 0 2-.9 2-2V5c0-1.1-.9-2-2-2zm0 12H9V5h10v10zm-8 6h2v-2h-2v2zm-4 0h2v-2H7v2z" fill="#afb3b9"/></svg>
<div class="t mono" id="src" style="left:943.70px;top:913.64px;font-size:18.4px;color:#fff;">App.js:6</div>
 <!--DEVTOOLS-->
 <div class="abs" style="left:0;top:147.2px;width:1600px;height:1.6px;background:#67686b"></div>
 </div>
 <div id="hl"></div>
</div>
</body>
</html>
